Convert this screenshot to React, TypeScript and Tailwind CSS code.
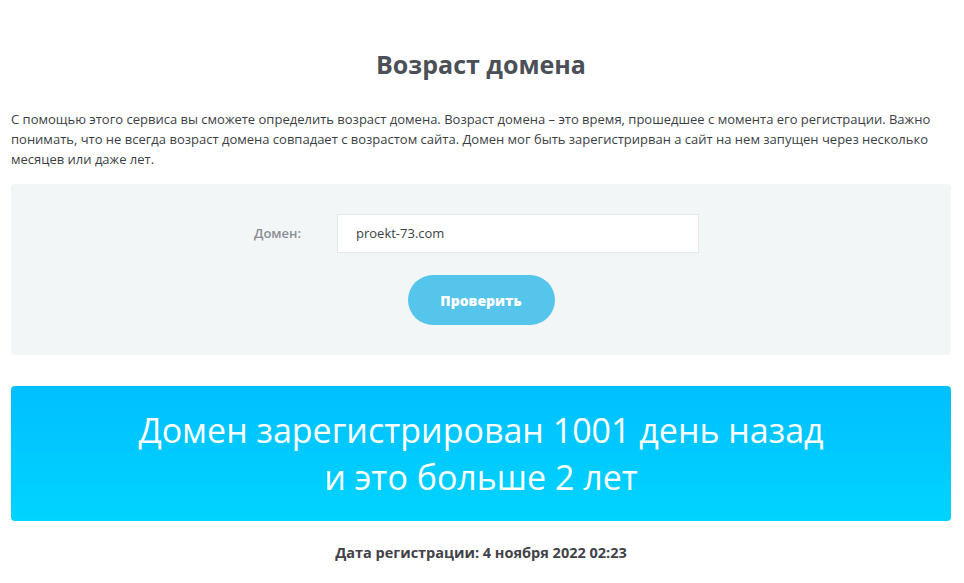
export default function App() {
  return (
    <div className="min-h-screen bg-white" style={{ fontFamily: '"Open Sans", "DejaVu Sans", sans-serif' }}>
      <div className="ml-[11px] mr-[13px] pt-[47px]">
        <h1 className="text-center text-[25px] leading-[34px] font-bold text-[#4b4f56]">Возраст домена</h1>

        <p className="mt-[28px] text-[13px] leading-[20px] text-[#3b3f45]">
          С помощью этого сервиса вы сможете определить возраст домена. Возраст домена – это время, прошедшее с момента его регистрации. Важно понимать, что не всегда возраст домена совпадает с возрастом сайта. Домен мог быть зарегистрирван а сайт на нем запущен через несколько месяцев или даже лет.
        </p>

        <div className="mt-[15px] h-[171px] rounded-[4px] bg-[#f3f6f7] pt-[30px]">
          <div className="flex items-center">
            <label className="w-[294px] pl-[243px] text-[13px] font-semibold text-[#8a8d91]">Домен:</label>
            <div className="ml-[32px] flex h-[39px] w-[362px] items-center border border-[#e6e9eb] bg-white pl-[18px] text-[13px] text-[#3b3f45]">
              proekt-73.com
            </div>
          </div>
          <div className="mt-[22px] flex justify-center">
            <button className="h-[50px] w-[147px] rounded-full bg-[#55c5ec] text-[14px] font-extrabold text-white">Проверить</button>
          </div>
        </div>

        <div className="mt-[31px] flex h-[135px] flex-col items-center justify-center rounded-[4px] bg-gradient-to-b from-[#00bfff] to-[#00d4ff] text-white">
          <p className="text-[34px] font-normal leading-[47px]">Домен зарегистрирован 1001 день назад</p>
          <p className="text-[34px] font-normal leading-[47px]">и это больше 2 лет</p>
        </div>

        <p className="mt-[21px] text-center text-[14.5px] font-bold text-[#3f4349]">Дата регистрации: 4 ноября 2022 02:23</p>
      </div>
    </div>
  );
}
